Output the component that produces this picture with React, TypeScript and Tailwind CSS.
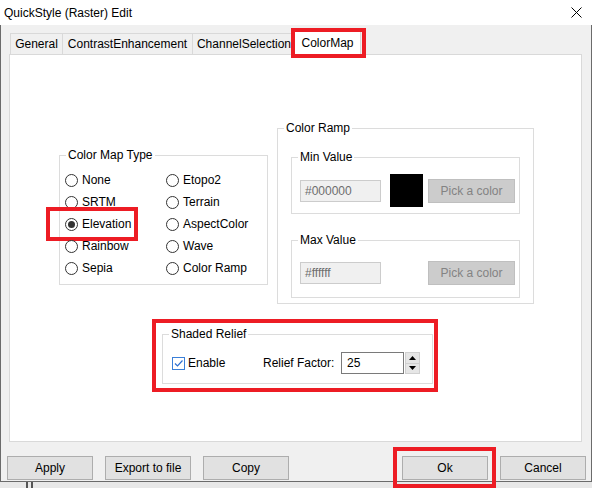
import { ReactNode } from "react";

const RED = "border-[#ed1c24]";

const GroupBox = ({
  title,
  className,
  children,
}: {
  title: string;
  className: string;
  children?: ReactNode;
}) => (
  <div className={`relative border border-[#dcdcdc] ${className}`}>
    <span className="absolute left-[6px] -top-[8px] bg-white px-[2px] leading-[14px]">
      {title}
    </span>
    {children}
  </div>
);

const Radio = ({ label, checked }: { label: string; checked?: boolean }) => (
  <div className="flex items-center h-[22px]">
    <span className="w-[13px] h-[13px] rounded-full border border-[#333333] bg-white flex items-center justify-center">
      {checked && <span className="w-[7px] h-[7px] rounded-full bg-[#333333]" />}
    </span>
    <span className="ml-[4px] leading-[14px]">{label}</span>
  </div>
);

const ColorRow = ({
  value,
  swatch,
}: {
  value: string;
  swatch?: boolean;
}) => (
  <div className={`flex items-center pl-[8px] ${swatch ? "pt-[16px]" : "pt-[20px]"}`}>
    <div className="w-[81px] h-[22px] bg-[#f0f0f0] border border-[#cccccc] pl-[4px] flex items-center text-[#6d6d6d]">
      {value}
    </div>
    {swatch && <div className="ml-[9px] w-[33px] h-[33px] bg-black" />}
    <button
      className={`${swatch ? "ml-[5px]" : "ml-[47px]"} w-[87px] h-[24px] bg-[#cccccc] border border-[#bfbfbf] text-[#838383]`}
    >
      Pick a color
    </button>
  </div>
);

const DialogButton = ({ label }: { label: string }) => (
  <button className="w-[86px] h-[24px] bg-[#e1e1e1] border border-[#adadad] text-black">
    {label}
  </button>
);

const mapTypes: [string, string][] = [
  ["None", "Etopo2"],
  ["SRTM", "Terrain"],
  ["Elevation", "AspectColor"],
  ["Rainbow", "Wave"],
  ["Sepia", "Color Ramp"],
];

export default function App() {
  return (
    <div
      className="w-[592px] h-[488px] bg-[#f0f0f0] flex flex-col text-[12px] text-black overflow-hidden"
      style={{ fontFamily: '"Liberation Sans", Arial, sans-serif' }}
    >
      {/* title bar */}
      <div className="h-[25px] bg-white flex items-center pl-[4px]">
        <span className="leading-[14px]">QuickStyle (Raster) Edit</span>
        <svg className="ml-auto mr-[10px]" width="11" height="11" viewBox="0 0 11 11">
          <path d="M0.5 0.5 L10.5 10.5 M10.5 0.5 L0.5 10.5" stroke="#000" strokeWidth="1" />
        </svg>
      </div>

      {/* window body */}
      <div className="h-[457px] border-l border-r border-b border-[#6b6b6b] flex flex-col">
        {/* tabs */}
        <div className="relative z-10 -mb-px mt-[6px] ml-[9px] flex items-end h-[24px]">
          <div className="w-[53px] h-[22px] border border-[#d9d9d9] flex items-center justify-center">
            General
          </div>
          <div className="-ml-px w-[131px] h-[22px] border border-[#d9d9d9] flex items-center justify-center">
            ContrastEnhancement
          </div>
          <div className="-ml-px w-[104px] h-[22px] border border-[#d9d9d9] flex items-center justify-center">
            ChannelSelection
          </div>
          <div className="relative -ml-[2px] w-[67px] h-[24px] bg-white border-l border-r border-t border-[#d9d9d9] flex items-center justify-center pb-[1px]">
            ColorMap
            <div className={`absolute -left-[4px] -top-[4px] w-[75px] h-[30px] border-4 ${RED}`} />
          </div>
        </div>

        {/* tab page */}
        <div className="ml-[8px] w-[573px] h-[388px] bg-white border border-[#d9d9d9]">
          <div className="flex items-start">
            <GroupBox title="Color Map Type" className="ml-[49px] mt-[100px] w-[209px] h-[130px]">
              <div className="grid grid-cols-[101px_1fr] pl-[5px] pt-[13px]">
                {mapTypes.map(([left, right]) => (
                  <div key={left} className="contents">
                    <div className="relative">
                      <Radio label={left} checked={left === "Elevation"} />
                      {left === "Elevation" && (
                        <div className={`absolute -left-[19px] -top-[6px] w-[92px] h-[34px] border-4 ${RED}`} />
                      )}
                    </div>
                    <Radio label={right} />
                  </div>
                ))}
              </div>
            </GroupBox>

            <GroupBox title="Color Ramp" className="ml-[9px] mt-[73px] w-[257px] h-[176px]">
              <GroupBox title="Min Value" className="ml-[13px] mt-[28px] w-[229px] h-[57px]">
                <ColorRow value="#000000" swatch />
              </GroupBox>
              <GroupBox title="Max Value" className="ml-[13px] mt-[26px] w-[229px] h-[58px]">
                <ColorRow value="#ffffff" />
              </GroupBox>
            </GroupBox>
          </div>

          <div className={`ml-[142px] mt-[15px] w-[286px] h-[73px] border-4 ${RED} pt-[11px] pl-[6px]`}>
            <GroupBox title="Shaded Relief" className="w-[271px] h-[50px]">
              <div className="flex items-center h-[22px] mt-[17px] pl-[9px]">
                <div className="w-[91px] flex items-center">
                  <svg width="13" height="13" viewBox="0 0 13 13">
                    <rect x="0.5" y="0.5" width="12" height="12" fill="#fff" stroke="#3a7fd8" />
                    <path d="M3 6.5 L5.5 9 L10.5 3.5" fill="none" stroke="#2d6fd1" strokeWidth="1.2" />
                  </svg>
                  <span className="ml-[3px]">Enable</span>
                </div>
                <span className="w-[78px]">Relief Factor:</span>
                <div className="w-[63px] h-[22px] border border-[#7a7a7a] flex items-center pl-[5px]">
                  25
                </div>
                <div className="ml-[1px] w-[15px] h-[22px] bg-[#e6e6e6] border border-[#d0d0d0] flex flex-col">
                  <div className="flex-1 flex items-center justify-center border-b border-[#d0d0d0]">
                    <svg width="7" height="4" viewBox="0 0 7 4">
                      <path d="M0 4 L3.5 0 L7 4 Z" fill="#000" />
                    </svg>
                  </div>
                  <div className="flex-1 flex items-center justify-center">
                    <svg width="7" height="4" viewBox="0 0 7 4">
                      <path d="M0 0 L7 0 L3.5 4 Z" fill="#000" />
                    </svg>
                  </div>
                </div>
              </div>
            </GroupBox>
          </div>
        </div>

        {/* dialog buttons */}
        <div className="mt-[14px] flex">
          <div className="ml-[6px] flex gap-[12px]">
            <DialogButton label="Apply" />
            <DialogButton label="Export to file" />
            <DialogButton label="Copy" />
          </div>
          <div className="ml-auto mr-[5px] flex gap-[12px]">
            <div className="relative">
              <DialogButton label="Ok" />
              <div className={`absolute -left-[9px] -top-[9px] w-[103px] h-[41px] border-4 ${RED}`} />
            </div>
            <DialogButton label="Cancel" />
          </div>
        </div>
      </div>

      {/* desktop strip below the window */}
      <div className="flex-1 bg-[#e8e8e8] flex">
        <div className="ml-[26px] w-[2px] bg-[#555555]" />
        <div className="ml-[3px] w-[2px] bg-[#555555]" />
      </div>
    </div>
  );
}
